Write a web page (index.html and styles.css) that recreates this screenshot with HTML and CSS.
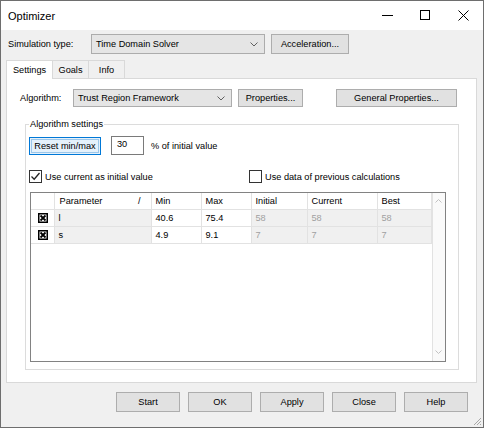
FILE: index.html
```html
<!DOCTYPE html>
<html>
<head>
    <title>Optimizer</title>
    <meta charset="utf-8">
    <link rel="stylesheet" href="styles.css">
</head>
<body>
    <div class="window">
        <div class="titlebar">
            <span class="title">Optimizer</span>
            <div class="caption">
                <span class="cap"><svg width="11" height="11"><line x1="0" y1="5.5" x2="11" y2="5.5" stroke="#000" stroke-width="1"/></svg></span>
                <span class="cap"><svg width="11" height="11"><rect x="0.5" y="0.5" width="9" height="9" fill="none" stroke="#000"/></svg></span>
                <span class="cap"><svg width="11" height="11"><path d="M0.5 0.5L10.5 10.5M10.5 0.5L0.5 10.5" stroke="#000" stroke-width="1"/></svg></span>
            </div>
        </div>

        <div class="client">
            <div class="sim-row">
                <span class="sim-label">Simulation type:</span>
                <div class="combo combo-sim">
                    <span>Time Domain Solver</span>
                    <svg class="chev" width="8" height="5"><path d="M0.5 0.5L4 4L7.5 0.5" fill="none" stroke="#606060"/></svg>
                </div>
                <button class="btn btn-accel">Acceleration...</button>
            </div>

            <div class="tabs">
                <div class="tab active">Settings</div>
                <div class="tab">Goals</div>
                <div class="tab">Info</div>
            </div>

            <div class="panel">
                <div class="alg-row">
                    <span class="alg-label">Algorithm:</span>
                    <div class="combo combo-alg">
                        <span>Trust Region Framework</span>
                        <svg class="chev" width="8" height="5"><path d="M0.5 0.5L4 4L7.5 0.5" fill="none" stroke="#606060"/></svg>
                    </div>
                    <button class="btn btn-props">Properties...</button>
                    <button class="btn btn-general">General Properties...</button>
                </div>

                <fieldset class="group">
                    <legend>Algorithm settings</legend>

                    <div class="reset-row">
                        <button class="btn btn-reset">Reset min/max</button>
                        <div class="edit">30</div>
                        <span class="pct">% of initial value</span>
                    </div>

                    <div class="check-row">
                        <label class="check check-cur">
                            <span class="box"><svg width="11" height="11"><path d="M1.5 5.5L4.2 8.2L9.5 2" fill="none" stroke="#222" stroke-width="1.3"/></svg></span>
                            Use current as initial value
                        </label>
                        <label class="check">
                            <span class="box"></span>
                            Use data of previous calculations
                        </label>
                    </div>

                    <div class="grid">
                        <table class="cells">
                            <colgroup>
                                <col style="width:23px"><col style="width:97px"><col style="width:50px"><col style="width:50px"><col style="width:56px"><col style="width:70px"><col style="width:54px">
                            </colgroup>
                            <tr class="head">
                                <td class="c-sel"></td>
                                <td class="c-param">Parameter<span class="sort">/</span></td>
                                <td>Min</td>
                                <td>Max</td>
                                <td>Initial</td>
                                <td>Current</td>
                                <td>Best</td>
                            </tr>
                            <tr>
                                <td class="c-sel"><span class="xbox"><svg width="10" height="10"><rect x="0.75" y="0.75" width="8.5" height="8.5" fill="#fff" stroke="#000" stroke-width="1.5"/><path d="M2.5 2.5L7.5 7.5M7.5 2.5L2.5 7.5" stroke="#000" stroke-width="1.8"/></svg></span></td>
                                <td class="ro">l</td>
                                <td>40.6</td>
                                <td>75.4</td>
                                <td class="ro dim">58</td>
                                <td class="ro dim">58</td>
                                <td class="ro dim">58</td>
                            </tr>
                            <tr>
                                <td class="c-sel"><span class="xbox"><svg width="10" height="10"><rect x="0.75" y="0.75" width="8.5" height="8.5" fill="#fff" stroke="#000" stroke-width="1.5"/><path d="M2.5 2.5L7.5 7.5M7.5 2.5L2.5 7.5" stroke="#000" stroke-width="1.8"/></svg></span></td>
                                <td class="ro">s</td>
                                <td>4.9</td>
                                <td>9.1</td>
                                <td class="ro dim">7</td>
                                <td class="ro dim">7</td>
                                <td class="ro dim">7</td>
                            </tr>
                        </table>
                        <div class="vscroll">
                            <svg width="7" height="4"><path d="M0.5 3.5L3.5 0.5L6.5 3.5" fill="none" stroke="#c2c2c2"/></svg>
                            <svg width="7" height="4"><path d="M0.5 0.5L3.5 3.5L6.5 0.5" fill="none" stroke="#c2c2c2"/></svg>
                        </div>
                    </div>
                </fieldset>
            </div>

            <div class="buttons">
                <button class="btn btn-bottom">Start</button>
                <button class="btn btn-bottom">OK</button>
                <button class="btn btn-bottom">Apply</button>
                <button class="btn btn-bottom">Close</button>
                <button class="btn btn-bottom">Help</button>
            </div>
        </div>

        <svg class="grip" width="9" height="9">
            <path d="M8 1L1 8M8 4L4 8M8 7L7 8" stroke="#a8a8a8" stroke-width="1"/>
        </svg>
    </div>
</body>
</html>
```

FILE: styles.css
```css
body {
    margin: 0;
    font-family: "Liberation Sans", Arial, sans-serif;
    font-size: 9.2px;
    color: #000;
    background: #fff;
}
.window {
    position: relative;
    width: 484px;
    height: 428px;
    box-sizing: border-box;
    border: 1px solid #6e6e6e;
    background: #f0f0f0;
    display: flex;
    flex-direction: column;
}
.titlebar {
    height: 29px;
    background: #fff;
    display: flex;
    align-items: center;
}
.title {
    padding-left: 7px;
    font-size: 11px;
}
.caption {
    margin-left: auto;
    display: flex;
    margin-right: 1px;
}
.cap {
    width: 38px;
    height: 29px;
    display: flex;
    align-items: center;
    justify-content: center;
}
.client {
    flex: 1;
    padding: 0 6px 0 5px;
    display: flex;
    flex-direction: column;
}
.sim-row {
    margin-top: 4px;
    height: 20px;
    display: flex;
    align-items: center;
}
.sim-label {
    width: 83px;
    padding-left: 2px;
}
.combo {
    box-sizing: border-box;
    background: #e5e5e5;
    border: 1px solid #acacac;
    display: flex;
    align-items: center;
    padding: 0 6px 0 4px;
}
.combo .chev {
    margin-left: auto;
}
.combo-sim {
    width: 174px;
    height: 20px;
}
.btn {
    box-sizing: border-box;
    font-family: inherit;
    font-size: 9.2px;
    color: #000;
    background: #e1e1e1;
    border: 1px solid #adadad;
    padding: 0;
    margin: 0;
}
.btn-accel {
    width: 78px;
    height: 20px;
    margin-left: 6px;
}
.tabs {
    margin-top: 6px;
    display: flex;
    height: 18px;
}
.tab {
    box-sizing: border-box;
    height: 18px;
    border: 1px solid #d9d9d9;
    border-bottom: none;
    background: #f0f0f0;
    display: flex;
    align-items: center;
    justify-content: center;
}
.tab + .tab {
    border-left: none;
}
.tab.active {
    width: 47px;
    background: #fff;
    height: 19px;
    margin-bottom: -1px;
    position: relative;
}
.tab:nth-child(2) { width: 36px; }
.tab:nth-child(3) { width: 36px; }
.panel {
    box-sizing: border-box;
    height: 305px;
    background: #fff;
    border: 1px solid #d9d9d9;
    padding: 10px 19px 0 13px;
}
.alg-row {
    height: 18px;
    display: flex;
    align-items: center;
}
.alg-label {
    width: 53px;
}
.combo-alg {
    width: 159px;
    height: 18px;
}
.btn-props {
    width: 65px;
    height: 18px;
    margin-left: 6px;
}
.btn-general {
    width: 121px;
    height: 18px;
    margin-left: 33px;
}
.group {
    margin: 11px 0 0 5px;
    padding: 6px 12px 7px 3px;
    border: 1px solid #dcdcdc;
    width: 432px;
    box-sizing: border-box;
}
.group legend {
    padding: 0 1px;
    line-height: 12px;
}
.reset-row {
    display: flex;
    align-items: center;
    height: 19px;
}
.btn-reset {
    width: 72px;
    height: 18px;
    background: #e5f1fb;
    border: 1px solid #0078d7;
    box-shadow: inset 0 0 0 1px #e5f1fb, inset 0 0 0 2px #9cc7ea;
}
.edit {
    box-sizing: border-box;
    width: 33px;
    height: 19px;
    margin-left: 10px;
    border: 1px solid #7a7a7a;
    background: #fff;
    padding: 2px 0 0 5px;
}
.pct {
    margin-left: 7px;
}
.check-row {
    margin-top: 15px;
    display: flex;
    align-items: center;
    height: 13px;
}
.check {
    display: flex;
    align-items: center;
    gap: 3px;
}
.check-cur {
    width: 220px;
}
.box {
    box-sizing: border-box;
    width: 13px;
    height: 13px;
    border: 1px solid #333;
    background: #fff;
    display: flex;
    align-items: center;
    justify-content: center;
}
.grid {
    margin: 9px 0 0 1px;
    box-sizing: border-box;
    width: 416px;
    height: 170px;
    border: 1px solid #828282;
    background: #fff;
    display: flex;
    align-items: flex-start;
}
.cells {
    border-collapse: collapse;
    table-layout: fixed;
    width: 400px;
}
.cells td {
    height: 16px;
    padding: 0 0 0 4px;
    border-right: 1px solid #e2e2e2;
    border-bottom: 1px solid #e2e2e2;
    white-space: nowrap;
    overflow: hidden;
    vertical-align: middle;
}
.cells .c-sel {
    padding: 0;
    text-align: center;
}
.c-param {
    padding-left: 5px !important;
}
.sort {
    float: right;
    margin-right: 10px;
}
.xbox {
    display: inline-flex;
    vertical-align: middle;
    margin-left: 1px;
}
.ro {
    background: #f0f0f0;
}
.dim {
    color: #a0a0a0;
}
.vscroll {
    box-sizing: border-box;
    width: 14px;
    height: 100%;
    border-left: 1px solid #e2e2e2;
    background: #fafafa;
    display: flex;
    flex-direction: column;
    justify-content: space-between;
    align-items: center;
    padding: 6px 0 7px;
}
.buttons {
    margin-top: 9px;
    display: flex;
    justify-content: flex-end;
    gap: 8px;
    padding-right: 9px;
}
.btn-bottom {
    width: 64px;
    height: 20px;
}
.grip {
    position: absolute;
    right: 1px;
    bottom: 1px;
}
```
